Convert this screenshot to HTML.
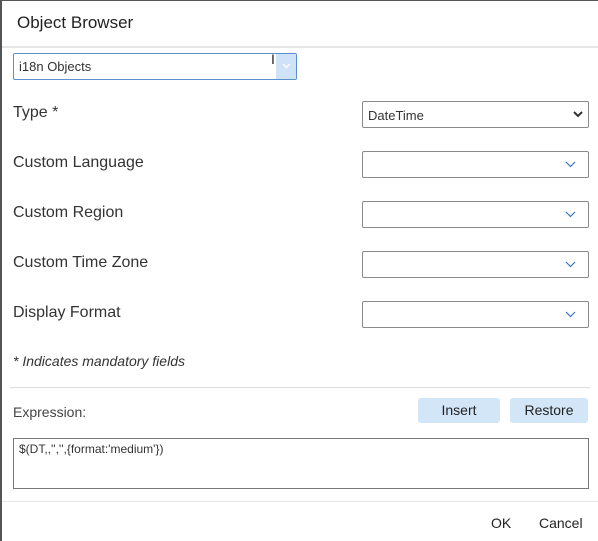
<!DOCTYPE html>
<html><head><style>
body{margin:0;width:598px;height:541px;overflow:hidden;background:#fff;font-family:"Liberation Sans",sans-serif;color:#333;position:relative}
.a{position:absolute}
.lbl{position:absolute;left:13px;font-size:16px;color:#333}
.sel{position:absolute;left:362px;width:225px;height:25px;border:1px solid #8a8a8a;border-radius:2px;background:#fff}
.chev{position:absolute;right:12px;top:6px}
.btn{position:absolute;top:398px;height:25px;background:#d3e6f8;border-radius:3px;font-size:14px;color:#222;text-align:center;line-height:25px}
</style></head><body>
<div class="a" style="left:0;top:0;width:2px;height:541px;background:#555"></div>
<div class="a" style="left:0;top:0;width:598px;height:1px;background:#555"></div>
<div class="a" style="left:17px;top:13px;font-size:17px;color:#222">Object Browser</div>
<div class="a" style="left:2px;top:46px;width:596px;height:2px;background:#e6e6e6"></div>
<div class="a" style="left:13px;top:53px;width:282px;height:25px;border:1px solid #5b8fd0;border-radius:2px"></div>
<div class="a" style="left:276px;top:54px;width:20px;height:25px;background:#cfe2f6"></div>
<svg class="a" style="left:282px;top:63px" width="9" height="6" viewBox="0 0 9 6"><path d="M1 1l3.5 3.5L8 1" stroke="#fff" stroke-width="1.3" fill="none"/></svg>
<div class="a" style="left:19px;top:59px;font-size:13px;color:#333">i18n Objects</div>
<div class="a" style="left:271px;top:51px;font-size:14px;color:#222">I</div>
<div class="lbl" style="top:104px">Type *</div>
<div class="lbl" style="top:154px">Custom Language</div>
<div class="lbl" style="top:204px">Custom Region</div>
<div class="lbl" style="top:254px">Custom Time Zone</div>
<div class="lbl" style="top:304px">Display Format</div>
<div class="sel" style="top:101px"><span class="a" style="left:5px;top:6px;font-size:13px">DateTime</span><svg class="chev" style="right:5px;top:8px" width="10" height="8" viewBox="0 0 10 8"><path d="M1 2l4 4 4-4" stroke="#333" stroke-width="2" fill="none"/></svg></div>
<div class="sel" style="top:151px"><svg class="chev" style="top:9px" width="11" height="7" viewBox="0 0 11 7"><path d="M1 1l4.5 4.5L10 1" stroke="#3b73c4" stroke-width="1.2" fill="none"/></svg></div>
<div class="sel" style="top:201px"><svg class="chev" style="top:9px" width="11" height="7" viewBox="0 0 11 7"><path d="M1 1l4.5 4.5L10 1" stroke="#3b73c4" stroke-width="1.2" fill="none"/></svg></div>
<div class="sel" style="top:251px"><svg class="chev" style="top:9px" width="11" height="7" viewBox="0 0 11 7"><path d="M1 1l4.5 4.5L10 1" stroke="#3b73c4" stroke-width="1.2" fill="none"/></svg></div>
<div class="sel" style="top:301px"><svg class="chev" style="top:9px" width="11" height="7" viewBox="0 0 11 7"><path d="M1 1l4.5 4.5L10 1" stroke="#3b73c4" stroke-width="1.2" fill="none"/></svg></div>
<div class="a" style="left:13px;top:353px;font-size:14px;font-style:italic;color:#333">* Indicates mandatory fields</div>
<div class="a" style="left:10px;top:387px;width:580px;height:1px;background:#ddd"></div>
<div class="a" style="left:13px;top:404px;font-size:14px;color:#444">Expression:</div>
<div class="btn" style="left:418px;width:82px">Insert</div>
<div class="btn" style="left:510px;width:78px">Restore</div>
<div class="a" style="left:13px;top:438px;width:574px;height:49px;border:1px solid #777"></div>
<div class="a" style="left:19px;top:442px;font-size:12px;color:#333">$(DT,,'','',{format:'medium'})</div>
<div class="a" style="left:2px;top:501px;width:596px;height:1px;background:#e6e6e6"></div>
<div class="a" style="left:491px;top:515px;font-size:14px;color:#222">OK</div>
<div class="a" style="left:539px;top:515px;font-size:14px;color:#222">Cancel</div>
</body></html>
